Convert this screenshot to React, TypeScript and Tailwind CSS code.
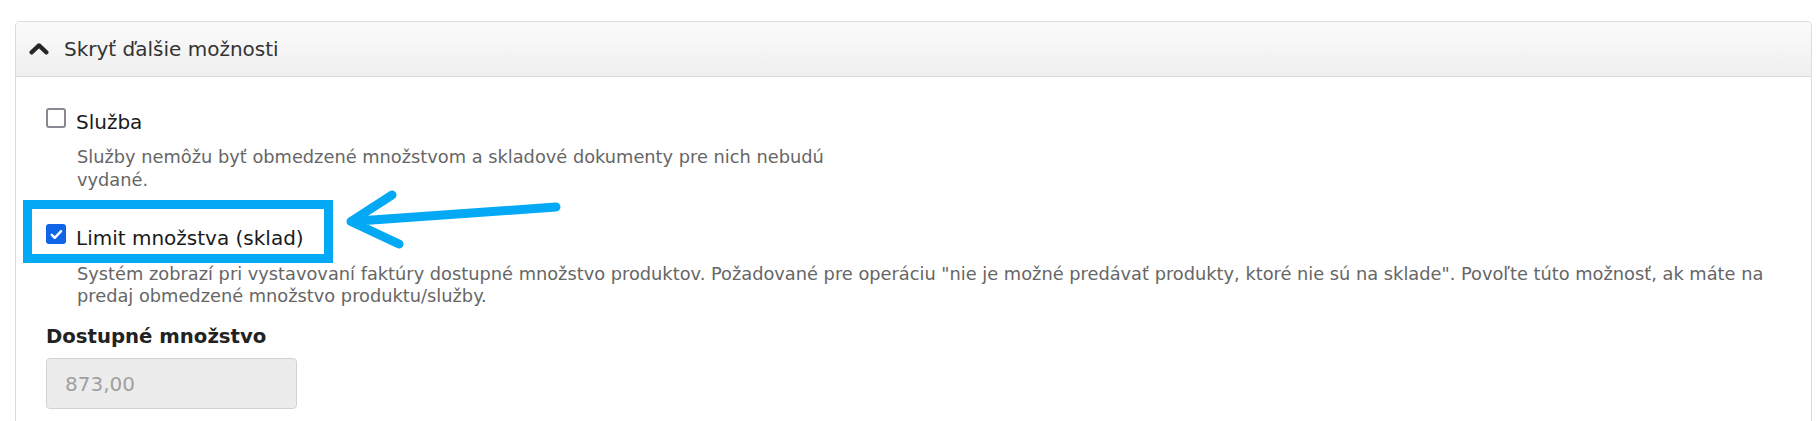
import React from "react";

const font = { fontFamily: '"DejaVu Sans", Verdana, sans-serif' };

function Box({ checked }: { checked?: boolean }) {
  if (checked) {
    return (
      <span className="flex h-5 w-5 shrink-0 items-center justify-center rounded-[3px] bg-[#0f64e8]">
        <svg viewBox="0 0 16 16" className="h-[15px] w-[15px]" fill="none">
          <path d="M3 8.4l3.1 3.1 6.8-7" stroke="#fff" strokeWidth="2.6" strokeLinecap="round" strokeLinejoin="round" />
        </svg>
      </span>
    );
  }
  return <span className="h-5 w-5 shrink-0 rounded-[3px] border-2 border-[#8a8793] bg-white" />;
}

export default function App() {
  return (
    <div className="relative h-[421px] w-[1817px] overflow-hidden bg-white pt-[21px]" style={font}>
      <div className="ml-[15px] mr-[5px] h-[420px] rounded-t-[5px] border-x border-t border-[#dcdcdc]">
        <div className="flex h-[55px] items-center gap-[15px] rounded-t-[5px] border-b border-[#d9d9d9] bg-gradient-to-b from-[#fbfbfb] to-[#efefef] pl-[13px]">
          <svg viewBox="0 0 20 12" className="h-[12px] w-[20px]" fill="none">
            <path d="M2.6 9.4L10 2.4l7.4 7" stroke="#262626" strokeWidth="4.2" strokeLinecap="round" strokeLinejoin="round" />
          </svg>
          <span className="text-[20px] leading-6 text-[#333]">Skryť ďalšie možnosti</span>
        </div>

        <div className="pl-[30px] pr-[31px]">
          <div className="mt-[31px] flex items-start gap-[10px]">
            <Box />
            <span className="mt-[2px] text-[20px] leading-6 text-[#1a1a1a]">Služba</span>
          </div>
          <p className="ml-[31px] mt-[11px] max-w-[800px] text-[17.8px] leading-[23px] text-[#666]">
            Služby nemôžu byť obmedzené množstvom a skladové dokumenty pre nich nebudú vydané.
          </p>

          <div className="mt-[33px] flex items-start gap-[10px]">
            <Box checked />
            <span className="mt-[2px] text-[20px] leading-6 text-[#1a1a1a]">Limit množstva (sklad)</span>
          </div>
          <p className="ml-[31px] mt-[13px] text-[17.8px] leading-[22px] text-[#666]">
            Systém zobrazí pri vystavovaní faktúry dostupné množstvo produktov. Požadované pre operáciu "nie je možné predávať produkty, ktoré nie sú na sklade". Povoľte túto možnosť, ak máte na predaj obmedzené množstvo produktu/služby.
          </p>

          <div className="mt-[18px] text-[19.7px] font-bold leading-6 text-[#222]">Dostupné množstvo</div>
          <div className="mt-[9px] flex h-[51px] w-[251px] items-center rounded-[4px] border border-[#d2d2d2] bg-[#ececec] px-[18px] text-[20px] text-[#a0a0a0]">
            873,00
          </div>
        </div>
      </div>

      <svg className="pointer-events-none absolute left-0 top-0" width="1817" height="421" fill="none">
        <rect x="27.5" y="204.5" width="301" height="54" stroke="#03a9f4" strokeWidth="9" />
        <path d="M556 207L351 221.5M392 195L351 221.5L399 244" stroke="#03a9f4" strokeWidth="9" strokeLinecap="round" strokeLinejoin="round" />
      </svg>
    </div>
  );
}
